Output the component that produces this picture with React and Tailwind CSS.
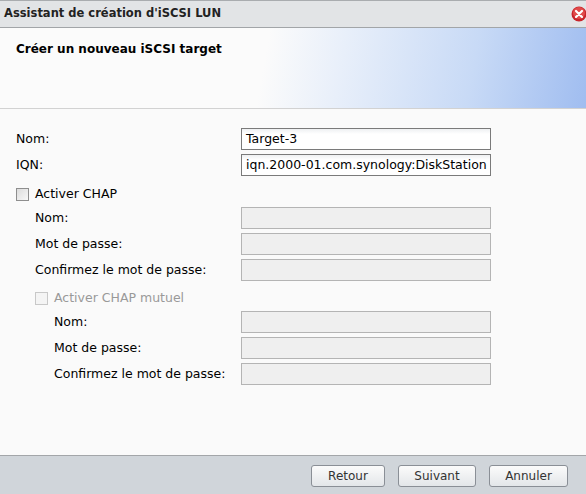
// App.jsx
const font = { fontFamily: '"DejaVu Sans", Verdana, sans-serif' };

function Field({ indent = 0, label, value, disabled }) {
  const pad = indent === 2 ? "pl-[54px]" : indent === 1 ? "pl-[35px]" : "pl-4";
  return (
    <div className={`flex h-[22px] items-center ${pad}`}>
      <span className={`flex-1 text-[12.5px] ${disabled ? "text-[#999]" : "text-black"}`}>{label}</span>
      <div
        className={`mr-[95px] flex h-[22px] w-[250px] items-center overflow-hidden whitespace-nowrap px-[4px] text-[12.5px] text-black ${
          value !== undefined
            ? "border border-[#7a7a7a] bg-[linear-gradient(#eef0f2,#fff_5px)]"
            : "border border-[#b4b4b4] bg-[#efefef]"
        }`}
      >
        {value}
      </div>
    </div>
  );
}

function Check({ indent, label, disabled }) {
  return (
    <div className={`flex h-[18px] items-center ${indent ? "pl-[35px]" : "pl-4"}`}>
      <span
        className={`mr-[6px] h-[13px] w-[13px] border ${
          disabled
            ? "border-[#c8c8c8] bg-[#f4f4f4]"
            : "border-[#8e8e8e] bg-[linear-gradient(135deg,#dcdcdc,#f8f8f8)]"
        }`}
      />
      <span className={`text-[12.5px] ${disabled ? "text-[#999]" : "text-black"}`}>{label}</span>
    </div>
  );
}

function Btn({ children, w }) {
  return (
    <button
      className={`flex h-[22px] ${w} items-center justify-center rounded-[3px] border border-[#8a8f96] bg-[linear-gradient(#fbfbfb,#e3e6e9)] text-[12px] text-[#333]`}
    >
      {children}
    </button>
  );
}

export default function App() {
  return (
    <div style={font} className="flex h-[494px] w-[586px] flex-col overflow-hidden bg-[#fafafa]">
      <div className="flex h-[28px] shrink-0 items-center justify-between border-y border-t-[#a9acaf] border-b-[#a2a5a8] bg-[#e2e4e6] pl-[4px]">
        <span className="text-[11.5px] font-bold text-[#222]">Assistant de création d'iSCSI LUN</span>
        <svg width="16" height="16" viewBox="0 0 16 16" className="translate-x-[1px]">
          <circle cx="8" cy="8" r="7.5" fill="#c8232a" />
          <circle cx="8" cy="7" r="6" fill="#e04a4a" />
          <path d="M5 5 L11 11 M11 5 L5 11" stroke="#fff" strokeWidth="2.2" strokeLinecap="round" />
        </svg>
      </div>
      <div className="h-[81px] shrink-0 border-b border-[#d2d2d2] bg-[linear-gradient(100deg,#fbfbfb_0%,#fbfbfb_45%,#e8effa_58%,#c8daf6_80%,#a0bdf0_100%)] pl-4 pt-[8px]">
        <span className="text-[12px] font-bold text-black">Créer un nouveau iSCSI target</span>
      </div>
      <div className="flex flex-1 flex-col pt-[19px]">
        <div className="flex flex-col gap-[4px]">
          <Field label="Nom:" value="Target-3" />
          <Field label="IQN:" value="iqn.2000-01.com.synology:DiskStation" />
        </div>
        <div className="mt-[9px]">
          <Check label="Activer CHAP" />
        </div>
        <div className="mt-[4px] flex flex-col gap-[4px]">
          <Field indent={1} label="Nom:" />
          <Field indent={1} label="Mot de passe:" />
          <Field indent={1} label="Confirmez le mot de passe:" />
        </div>
        <div className="mt-[8px]">
          <Check indent label="Activer CHAP mutuel" disabled />
        </div>
        <div className="mt-[4px] flex flex-col gap-[4px]">
          <Field indent={2} label="Nom:" />
          <Field indent={2} label="Mot de passe:" />
          <Field indent={2} label="Confirmez le mot de passe:" />
        </div>
      </div>
      <div className="flex h-[39px] shrink-0 items-center justify-end gap-[13px] border-t border-[#a3a6a9] bg-[#d0d5da] pr-[18px] pt-[2px]">
        <Btn w="w-[74px]">Retour</Btn>
        <Btn w="w-[78px]">Suivant</Btn>
        <Btn w="w-[79px]">Annuler</Btn>
      </div>
    </div>
  );
}
